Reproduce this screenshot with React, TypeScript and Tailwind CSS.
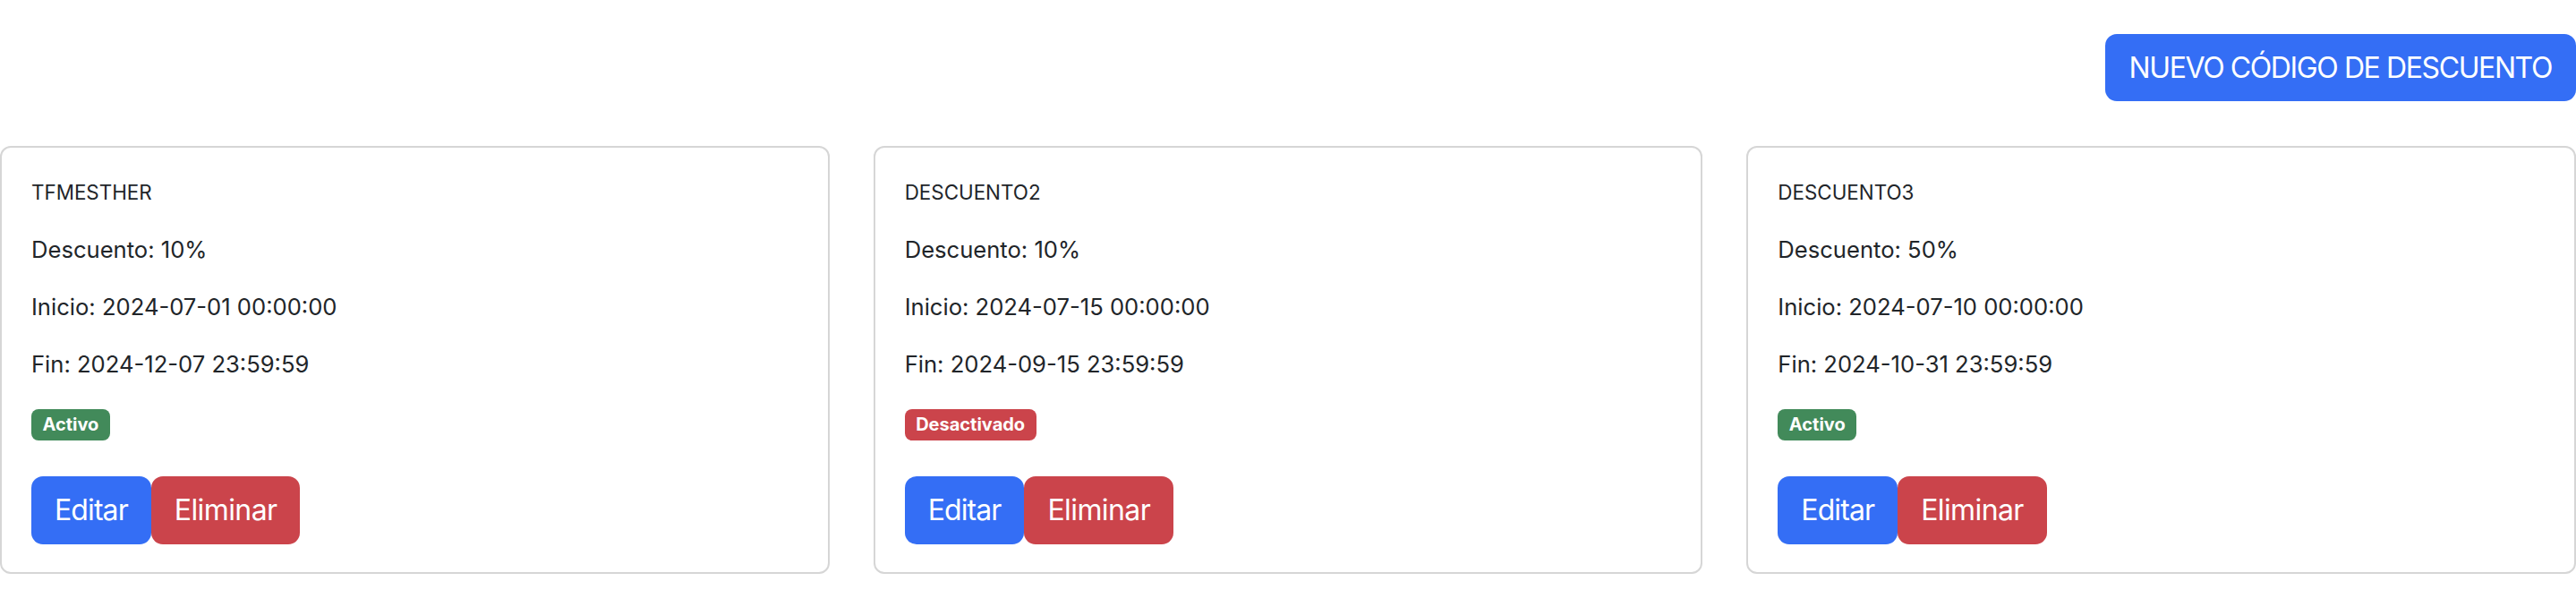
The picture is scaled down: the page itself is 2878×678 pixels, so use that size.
import React from "react";

interface Discount {
  code: string;
  percent: number;
  start: string;
  end: string;
  active: boolean;
}

const discounts: Discount[] = [
  { code: "TFMESTHER", percent: 10, start: "2024-07-01 00:00:00", end: "2024-12-07 23:59:59", active: true },
  { code: "DESCUENTO2", percent: 10, start: "2024-07-15 00:00:00", end: "2024-09-15 23:59:59", active: false },
  { code: "DESCUENTO3", percent: 50, start: "2024-07-10 00:00:00", end: "2024-10-31 23:59:59", active: true },
];

const DiscountCard = ({ item }: { item: Discount }) => (
  <div className="border-2 border-[#d6d6d6] rounded-[12px] px-[33px] pt-[33px] pb-[31px] bg-white">
    <p className="text-[22.4px] leading-[33.6px] mb-[28px]">{item.code}</p>
    <p className="text-[25.6px] leading-[38.4px] mb-[25.6px]">Descuento: {item.percent}%</p>
    <p className="text-[25.6px] leading-[38.4px] mb-[25.6px]">Inicio: {item.start}</p>
    <p className="text-[25.6px] leading-[38.4px] mb-[30.6px]">Fin: {item.end}</p>
    <div className="h-[35px]">
      {item.active ? (
        <span className="inline-block h-[35px] px-[12.5px] rounded-[8px] bg-[#428a5a] text-white text-[20px] font-bold leading-[35px]">
          Activo
        </span>
      ) : (
        <span className="inline-block h-[35px] px-[12.5px] rounded-[8px] bg-[#cb444b] text-white text-[20px] font-bold leading-[35px]">
          Desactivado
        </span>
      )}
    </div>
    <div className="flex mt-[40px]">
      <button className="h-[76px] px-[26px] rounded-[13px] bg-[#346ef5] text-white text-[32px] leading-none tracking-[-0.9px]">
        Editar
      </button>
      <button className="h-[76px] px-[26px] rounded-[13px] bg-[#cb444b] text-white text-[32px] leading-none tracking-[-0.6px]">
        Eliminar
      </button>
    </div>
  </div>
);

export default function App() {
  return (
    <div className="min-h-screen bg-white text-[#212529] font-['Inter','Roboto',sans-serif]">
      <div className="flex justify-end pt-[38px]">
        <button className="h-[75px] px-[27px] rounded-[13px] bg-[#346ef5] text-white text-[32px] leading-none tracking-[-1.4px]">
          NUEVO CÓDIGO DE DESCUENTO
        </button>
      </div>
      <div className="grid grid-cols-3 gap-[49px] mt-[50px]">
        {discounts.map((d) => (
          <DiscountCard key={d.code} item={d} />
        ))}
      </div>
    </div>
  );
}
